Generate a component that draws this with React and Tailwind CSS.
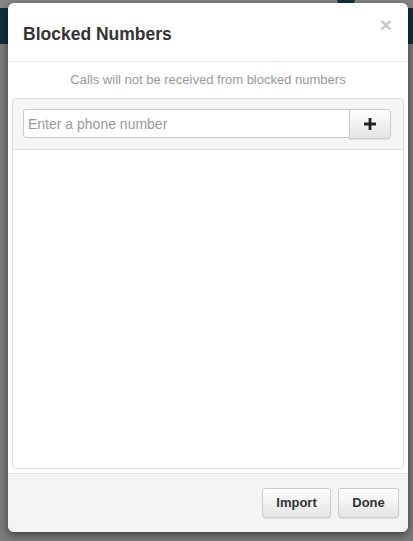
import React from "react";

const font = { fontFamily: '"Liberation Sans", Arial, sans-serif' };

/* Gradient button shared by the footer and the add button */
const Btn = ({ children, className = "" }) => (
  <button
    className={`h-[30px] border border-[#ccc] bg-gradient-to-b from-white to-[#e4e4e4] text-[13px] font-bold text-[#333] shadow-[0_1px_1px_rgba(0,0,0,0.08)] ${className}`}
  >
    {children}
  </button>
);

export default function App() {
  return (
    <div className="relative h-[541px] w-[413px] overflow-hidden bg-[#7b7b7b]" style={font}>
      {/* dimmed app behind the dialog */}
      <div className="h-2 bg-[#858585]" />
      <div className="h-9 bg-[#12303a]" />
      <div className="absolute left-[337px] top-[-8px] h-[14px] w-[18px] rounded-full bg-[#12303a]" />

      {/* dialog */}
      <div className="absolute left-2 top-[3px] flex h-[529px] w-[400px] flex-col rounded-md bg-white shadow-[0_3px_8px_rgba(0,0,0,0.5)]">
        <div className="flex h-[59px] shrink-0 items-start justify-between border-b border-[#e5e5e5] pl-[15px] pr-[16px]">
          <h1 className="mt-[20px] text-[17.5px] font-bold leading-[22px] text-[#333]">Blocked Numbers</h1>
          <span className="mt-[11px] text-[21px] font-bold leading-[21px] text-[#c8c8c8]">×</span>
        </div>

        <div className="flex flex-1 flex-col px-1 pb-1">
          <p className="py-[9px] text-center text-[13px] leading-[18px] text-[#999]">
            Calls will not be received from blocked numbers
          </p>
          <div className="flex flex-1 flex-col rounded border border-[#ddd]">
            <div className="flex rounded-t bg-[#f5f5f5] px-[10px] py-[10px] border-b border-[#ddd]">
              <input
                placeholder="Enter a phone number"
                className="h-[29px] flex-1 rounded-l-[3px] border border-[#ccc] bg-white px-[4px] text-[14px] text-[#555] placeholder:text-[#999] outline-none"
              />
              <Btn className="-ml-px flex h-[29px] w-[42px] items-center justify-center rounded-r-[3px]">
                <svg width="12" height="12" viewBox="0 0 12 12">
                  <path d="M4.6 0h2.8v4.6H12v2.8H7.4V12H4.6V7.4H0V4.6h4.6z" fill="#222" />
                </svg>
              </Btn>
              <div className="w-[2px]" />
            </div>
            <div className="flex-1 rounded-b bg-white" />
          </div>
        </div>

        <div className="flex h-[59px] shrink-0 items-center justify-end gap-[7px] rounded-b-md border-t border-[#e5e5e5] bg-[#f4f4f4] pr-[9px]">
          <Btn className="w-[69px] rounded-[3px]">Import</Btn>
          <Btn className="w-[61px] rounded-[3px]">Done</Btn>
        </div>
      </div>
    </div>
  );
}
